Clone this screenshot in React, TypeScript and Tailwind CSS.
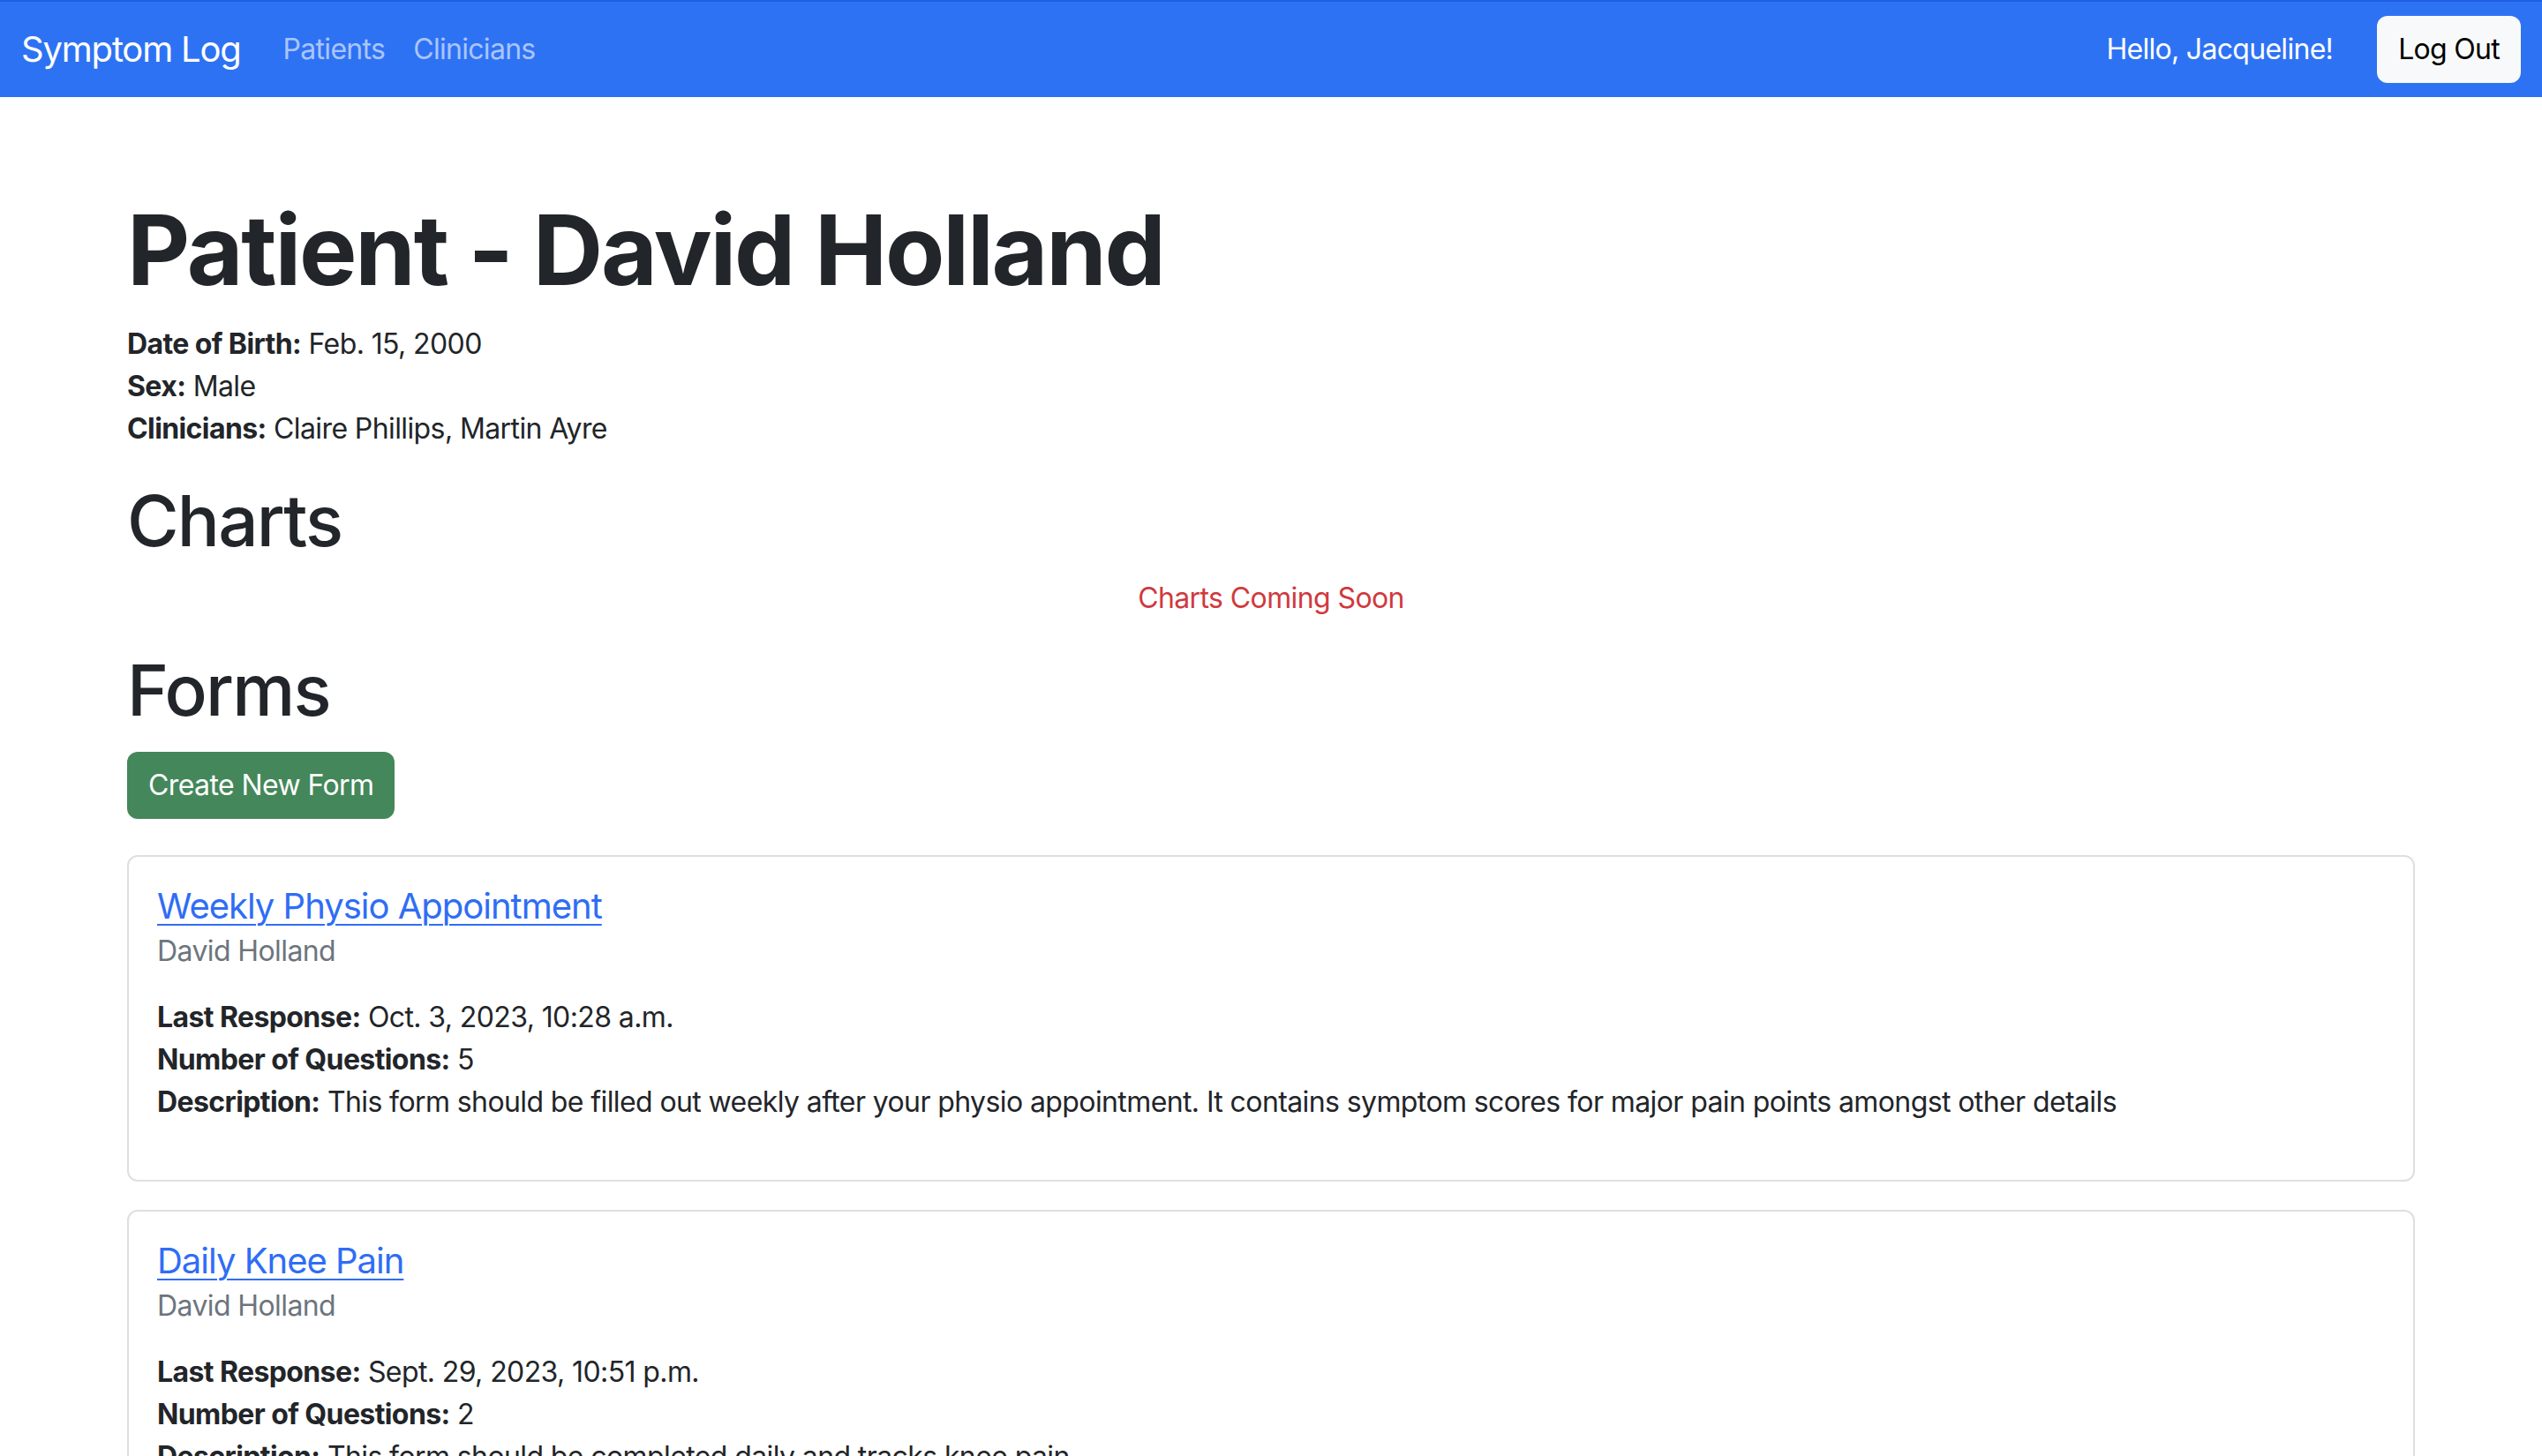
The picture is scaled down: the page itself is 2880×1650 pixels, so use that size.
// ----------------------
// Patient detail page
// ----------------------
const forms = [
  {
    title: "Weekly Physio Appointment",
    patient: "David Holland",
    lastResponse: "Oct. 3, 2023, 10:28 a.m.",
    questions: 5,
    description:
      "This form should be filled out weekly after your physio appointment. It contains symptom scores for major pain points amongst other details",
  },
  {
    title: "Daily Knee Pain",
    patient: "David Holland",
    lastResponse: "Sept. 29, 2023, 10:51 p.m.",
    questions: 2,
    description: "This form should be completed daily and tracks knee pain",
  },
];

function Navbar() {
  return (
    <nav className="h-[110px] bg-[#2e72f4] border-t-2 border-[#1d5fe2] flex items-center justify-between px-6">
      <div className="flex items-center">
        <span className="text-[40px] leading-[1.5] tracking-[-1.2px] text-white mr-[48px]">Symptom Log</span>
        <a className="text-[32px] tracking-[-0.7px] text-white/60 mr-[32px]">Patients</a>
        <a className="text-[32px] tracking-[-0.7px] text-white/60">Clinicians</a>
      </div>
      <div className="flex items-center">
        <span className="text-[32px] tracking-[-0.7px] text-white mr-[50px]">Hello, Jacqueline!</span>
        <button className="h-[76px] px-6 bg-[#f8f9fa] rounded-xl text-[32px] tracking-[-0.7px] text-black">
          Log Out
        </button>
      </div>
    </nav>
  );
}

function FormCard({ f }: { f: (typeof forms)[number] }) {
  return (
    <div className="border-2 border-[#dfdfdf] rounded-xl p-8 mb-8">
      <a className="block text-[40px] leading-[48px] tracking-[-1px] text-[#2f6df5] underline underline-offset-[6px] decoration-2">
        {f.title}
      </a>
      <div className="text-[32px] leading-[38px] text-[#6c757d] mt-2 mb-8">{f.patient}</div>
      <div className="text-[32px] leading-[48px] mb-8">
        <div>
          <b className="font-bold">Last Response:</b> {f.lastResponse}
        </div>
        <div>
          <b className="font-bold">Number of Questions:</b> {f.questions}
        </div>
        <div>
          <b className="font-bold">Description:</b> {f.description}
        </div>
      </div>
    </div>
  );
}

export default function App() {
  return (
    <div className="min-h-screen bg-white text-[#222529] tracking-[-0.6px] font-['Inter',sans-serif]">
      <Navbar />
      <main className="max-w-[2640px] mx-auto px-6 pt-[106px]">
        <h1 className="text-[110px] leading-[134px] font-bold tracking-[-2.2px] mb-4">Patient - David Holland</h1>
        <div className="text-[32px] leading-[48px] mb-8">
          <div>
            <b className="font-bold">Date of Birth:</b> Feb. 15, 2000
          </div>
          <div>
            <b className="font-bold">Sex:</b> Male
          </div>
          <div>
            <b className="font-bold">Clinicians:</b> Claire Phillips, Martin Ayre
          </div>
        </div>

        <h2 className="text-[80px] leading-[96px] font-medium tracking-[-1.8px] mb-4">Charts</h2>
        <p className="text-[32px] leading-[48px] text-center text-[#d0393e] mb-8">Charts Coming Soon</p>

        <h2 className="text-[80px] leading-[96px] font-medium tracking-[-1.8px] mb-[22px]">Forms</h2>
        <button className="h-[76px] px-6 bg-[#44875a] rounded-xl text-[32px] text-white mb-[41px]">
          Create New Form
        </button>

        {forms.map((f) => (
          <FormCard key={f.title} f={f} />
        ))}
      </main>
    </div>
  );
}
